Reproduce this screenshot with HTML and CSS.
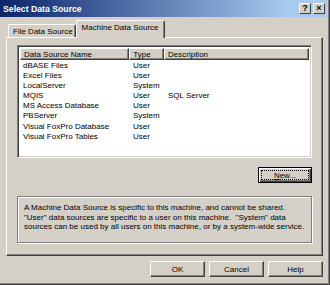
FILE: index.html
```html
<!DOCTYPE html>
<html lang="en">
<head>
  <meta charset="UTF-8">
  <title>Select Data Source</title>
  <link rel="stylesheet" href="styles.css">
</head>
<body>
  <div class="window">
    <div class="titlebar">
      <span class="title">Select Data Source</span>
      <div class="title-buttons">
        <span class="tbtn">?</span>
        <span class="tbtn">&times;</span>
      </div>
    </div>

    <div class="content">
      <div class="tabs">
        <div class="tab">File Data Source</div>
        <div class="tab active">Machine Data Source</div>
      </div>

      <div class="panel">
        <div class="listview">
          <div class="header">
            <div class="col name">Data Source Name</div>
            <div class="col type">Type</div>
            <div class="col desc">Description</div>
          </div>
          <div class="row"><span class="name">dBASE Files</span><span class="type">User</span><span class="desc"></span></div>
          <div class="row"><span class="name">Excel Files</span><span class="type">User</span><span class="desc"></span></div>
          <div class="row"><span class="name">LocalServer</span><span class="type">System</span><span class="desc"></span></div>
          <div class="row"><span class="name">MQIS</span><span class="type">User</span><span class="desc">SQL Server</span></div>
          <div class="row"><span class="name">MS Access Database</span><span class="type">User</span><span class="desc"></span></div>
          <div class="row"><span class="name">PBServer</span><span class="type">System</span><span class="desc"></span></div>
          <div class="row"><span class="name">Visual FoxPro Database</span><span class="type">User</span><span class="desc"></span></div>
          <div class="row"><span class="name">Visual FoxPro Tables</span><span class="type">User</span><span class="desc"></span></div>
        </div>

        <div class="new-row">
          <button class="btn default"><span class="focus"><u>N</u>ew...</span></button>
        </div>

        <div class="info">
          A Machine Data Source is specific to this machine, and cannot be shared.
          "User" data sources are specific to a user on this machine.&nbsp; "System" data
          sources can be used by all users on this machine, or by a system-wide service.
        </div>
      </div>

      <div class="buttons">
        <button class="btn">OK</button>
        <button class="btn">Cancel</button>
        <button class="btn">Help</button>
      </div>
    </div>
  </div>
</body>
</html>
```

FILE: styles.css
```css
body {
  margin: 0;
  background-color: #d4d0c8;
  font-family: "Liberation Sans", Arial, sans-serif;
  font-size: 8px;
  color: #000;
}
.window {
  width: 330px;
  height: 285px;
  box-sizing: border-box;
  background-color: #d4d0c8;
  border-right: 1px solid #404040;
  border-bottom: 1px solid #404040;
  box-shadow: inset -1px -1px 0 #808080;
  overflow: hidden;
}
.titlebar {
  height: 17px;
  margin-right: 2px;
  display: flex;
  align-items: center;
  justify-content: space-between;
  padding: 0 2px 0 3px;
  background: linear-gradient(to right, #0a246a, #a6caf0 88%);
}
.title {
  color: #fff;
  font-weight: bold;
  font-size: 8.7px;
}
.title-buttons {
  display: flex;
  gap: 2px;
}
.tbtn {
  width: 12px;
  height: 11px;
  box-sizing: border-box;
  display: flex;
  align-items: center;
  justify-content: center;
  background-color: #d4d0c8;
  border-top: 1px solid #fff;
  border-left: 1px solid #fff;
  border-right: 1px solid #404040;
  border-bottom: 1px solid #404040;
  font-weight: bold;
  font-size: 9px;
  line-height: 1;
}
.content {
  padding: 4px 6px 0 6px;
}
.tabs {
  height: 16px;
  display: flex;
  align-items: flex-end;
  padding-left: 2px;
  position: relative;
  z-index: 1;
}
.tab {
  height: 13px;
  box-sizing: border-box;
  padding: 2px 2px 0 4px;
  border-top: 1px solid #fff;
  border-left: 1px solid #fff;
  border-right: 1px solid #404040;
  box-shadow: inset -1px 0 0 #808080;
  border-radius: 2px 2px 0 0;
  white-space: nowrap;
}
.tab.active {
  height: 18px;
  margin-bottom: -1px;
  padding: 2px 5px 0 5px;
  background-color: #d4d0c8;
}
.panel {
  height: 219px;
  box-sizing: border-box;
  border-top: 1px solid #fff;
  border-left: 1px solid #fff;
  border-right: 1px solid #404040;
  border-bottom: 1px solid #404040;
  box-shadow: inset -1px -1px 0 #808080;
  padding: 7px 10px 0 10px;
}
.listview {
  height: 113px;
  box-sizing: border-box;
  background-color: #fff;
  border-top: 1px solid #808080;
  border-left: 1px solid #808080;
  border-right: 1px solid #fff;
  border-bottom: 1px solid #fff;
  box-shadow: inset 1px 1px 0 #404040, inset -1px -1px 0 #d4d0c8;
  padding: 2px 2px 0 2px;
}
.header {
  display: flex;
  height: 12px;
  margin-bottom: 1px;
}
.col {
  box-sizing: border-box;
  background-color: #d4d0c8;
  border-top: 1px solid #fff;
  border-left: 1px solid #fff;
  border-right: 1px solid #404040;
  border-bottom: 1px solid #404040;
  box-shadow: inset -1px -1px 0 #808080;
  padding: 1px 3px 0 3px;
  line-height: 9px;
  white-space: nowrap;
}
.col.name { width: 110px; }
.col.type { width: 35px; }
.col.desc { width: 146px; }
.row {
  display: flex;
  height: 10.1px;
  line-height: 10px;
  white-space: nowrap;
}
.row span { padding-left: 3px; box-sizing: border-box; }
.row .name { width: 110px; }
.row .type { width: 35px; }
.row .desc { flex: 1; }
.new-row {
  display: flex;
  justify-content: flex-end;
  margin-top: 9px;
}
.btn {
  width: 55px;
  height: 16px;
  box-sizing: border-box;
  padding: 0;
  background-color: #d4d0c8;
  font-family: inherit;
  font-size: 8px;
  color: #000;
  border-top: 1px solid #fff;
  border-left: 1px solid #fff;
  border-right: 1px solid #404040;
  border-bottom: 1px solid #404040;
  box-shadow: inset -1px -1px 0 #808080;
}
.btn.default {
  width: 54px;
  border: 1px solid #000;
  box-shadow: inset 1px 1px 0 #fff, inset -1px -1px 0 #404040, inset -2px -2px 0 #808080;
  padding: 2px;
}
.focus {
  display: block;
  height: 100%;
  box-sizing: border-box;
  border: 1px dotted #000;
  line-height: 9px;
}
.info {
  height: 47px;
  box-sizing: border-box;
  margin-top: 13px;
  border: 1px solid #808080;
  box-shadow: 1px 1px 0 #fff, inset 1px 1px 0 #fff;
  padding: 6px 4px 0 6px;
  line-height: 9.5px;
}
.buttons {
  display: flex;
  justify-content: flex-end;
  gap: 4px;
  margin-top: 5px;
}
```
